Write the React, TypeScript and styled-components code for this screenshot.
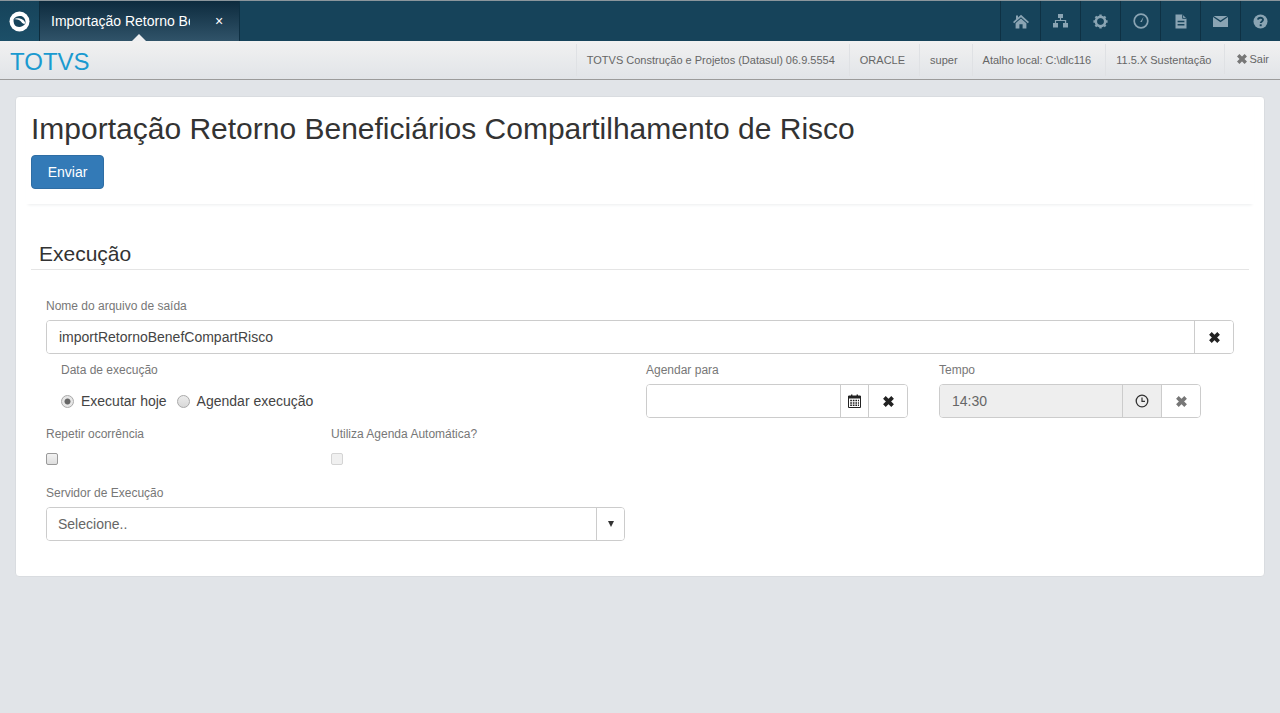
import React from "react";
import styled, { createGlobalStyle } from "styled-components";

const Global = createGlobalStyle`
  html, body { margin: 0; padding: 0; height: 100%; background: #e1e4e8; }
  body { font-family: "Liberation Sans", Arial, sans-serif; font-size: 14px; color: #333; }
  * { box-sizing: border-box; }
`;

const Page = styled.div`
  width: 1280px;
  height: 713px;
  overflow: hidden;
  background: #e1e4e8;
`;
const TopBar = styled.div`
  height: 41px;
  display: flex;
  background: #16435a;
  border-top: 1px solid #8b969c;
`;
const LogoBox = styled.div`
  width: 40px;
  display: flex;
  align-items: center;
  justify-content: center;
  background: linear-gradient(#16435a, #1c4f68);
  border-right: 1px solid #0d2c3d;
`;
const Tab = styled.div`
  position: relative;
  width: 200px;
  display: flex;
  align-items: center;
  padding-left: 11px;
  background: linear-gradient(#0d2b3e, #305369);
  border-right: 1px solid #0e2f42;
  color: #fff;
`;
const TabTitle = styled.span`
  width: 139px;
  overflow: hidden;
  white-space: nowrap;
  font-size: 14px;
`;
const TabClose = styled.span`
  margin-left: 25px;
  font-size: 14px;
  line-height: 1;
`;
const TabCaret = styled.span`
  position: absolute;
  left: 92px;
  bottom: 0;
  border-left: 7px solid transparent;
  border-right: 7px solid transparent;
  border-bottom: 7px solid #edeef0;
`;
const Spacer = styled.div`
  flex: 1;
`;
const IconButton = styled.div`
  width: 40px;
  display: flex;
  align-items: center;
  justify-content: center;
  color: #8aa4b3;
  border-left: 1px solid #0e3144;
`;
const SubBar = styled.div`
  height: 39px;
  display: flex;
  align-items: stretch;
  background: linear-gradient(#f1f1f1, #e1e4e8);
  border-bottom: 1px solid #9b9b9b;
`;
const Brand = styled.div`
  flex: 1;
  padding-left: 10px;
  font-size: 24px;
  line-height: 41px;
  color: #1a9ad0;
`;
const Info = styled.div`
  display: flex;
  align-items: center;
  margin: 3px 0;
  padding: 0 14px 0 10px;
  font-size: 11px;
  color: #666;
  border-left: 1px solid #dfe1e4;
`;
const VersionInfo = styled(Info)`
  padding: 0 13px 0 10px;
`;
const Exit = styled(Info)`
  margin-bottom: 5px;
  gap: 1px;
  padding: 0 11px;
`;
const Card = styled.main`
  margin: 16px 15px 0;
  height: 481px;
  background: #fff;
  border: 1px solid #d9dce0;
  border-radius: 4px;
`;
const PageHead = styled.header`
  height: 107px;
  margin: 0 10px;
  padding: 14px 5px 0;
  box-shadow: 0 3px 3px -2px #eceeef;
`;
const Title = styled.h1`
  margin: 0;
  font-size: 30px;
  line-height: 36px;
  font-weight: 400;
  color: #333;
`;
const PrimaryButton = styled.button`
  display: block;
  margin-top: 8px;
  width: 73px;
  height: 34px;
  padding: 0;
  background: #337ab7;
  border: 1px solid #2e6da4;
  border-radius: 4px;
  color: #fff;
  font: 14px "Liberation Sans", Arial, sans-serif;
`;
const Section = styled.section`
  margin: 0 15px;
  padding-top: 37px;
`;
const SectionTitle = styled.h2`
  margin: 0;
  padding-left: 8px;
  height: 29px;
  font-size: 21px;
  line-height: 26px;
  font-weight: 400;
  color: #333;
  border-bottom: 1px solid #e5e5e5;
`;
const Form = styled.div`
  padding: 29px 15px 0;
`;
const Label = styled.label`
  display: block;
  height: 15px;
  font-size: 12px;
  line-height: 15px;
  color: #777;
`;
const InputGroup = styled.div<{ $w?: number }>`
  display: flex;
  height: 34px;
  margin-top: 6px;
  width: ${(p) => (p.$w ? `${p.$w}px` : "100%")};
  border: 1px solid #ccc;
  border-radius: 4px;
  overflow: hidden;
  background: #fff;
`;
const InputText = styled.div<{ $off?: boolean; $hint?: boolean }>`
  flex: 1;
  display: flex;
  align-items: center;
  padding-left: ${(p) => (p.$hint ? 11 : 12)}px;
  font-size: 14px;
  color: ${(p) => (p.$off || p.$hint ? "#666" : "#444")};
  background: ${(p) => (p.$off ? "#eee" : "#fff")};
`;
const Addon = styled.div<{ $w?: number; $muted?: boolean; $off?: boolean }>`
  width: ${(p) => p.$w ?? 39}px;
  display: flex;
  align-items: center;
  justify-content: center;
  border-left: 1px solid #ccc;
  color: ${(p) => (p.$muted ? "#777" : "#222")};
  background: ${(p) => (p.$off ? "#eee" : "#fff")};
`;
const ExecRow = styled.div`
  display: flex;
  padding-top: 9px;
`;
const DateCol = styled.div`
  width: 600px;
  padding: 0 0 0 15px;
`;
const RadioRow = styled.div`
  display: flex;
  align-items: center;
  height: 20px;
  margin-top: 13px;
  font-size: 14px;
  color: #444;
`;
const Radio = styled.span<{ $on?: boolean }>`
  width: 13px;
  height: 13px;
  border-radius: 50%;
  border: 1px solid #a9a9a9;
  background: ${(p) => (p.$on ? "radial-gradient(circle, #666 0 2.6px, #e6e6e6 3.4px)" : "linear-gradient(#ececec, #d8d8d8)")};
  margin-left: ${(p) => (p.$on ? "0" : "10px")};
  margin-right: 7px;
`;
const FieldCol = styled.div<{ $w: number }>`
  width: ${(p) => p.$w}px;
`;
const CheckRow = styled.div`
  display: flex;
  padding-top: 9px;
`;
const CheckField = styled.div`
  width: 285px;
`;
const CheckCell = styled.div`
  height: 34px;
  padding-top: 11px;
`;
const Check = styled.span<{ $off?: boolean }>`
  display: block;
  width: 12px;
  height: 12px;
  border-radius: 2px;
  border: 1px solid ${(p) => (p.$off ? "#d4d4d4" : "#9a9a9a")};
  background: ${(p) => (p.$off ? "#f0f0f0" : "linear-gradient(#f2f2f2, #dedede)")};
`;
const ServerField = styled.div`
  padding-top: 10px;
`;
const Caret = styled.span`
  border-left: 3.5px solid transparent;
  border-right: 3.5px solid transparent;
  border-top: 6px solid #333;
`;

const Cross = ({ color = "currentColor", size = 13 }: { color?: string; size?: number }) => (
  <svg width={size} height={size} viewBox="0 0 13 13" aria-hidden>
    <path d="M2.4 2.4 10.6 10.6M10.6 2.4 2.4 10.6" fill="none" stroke={color} strokeWidth="3.7" />
  </svg>
);
const Logo = () => (
  <svg width="21" height="21" viewBox="0 0 21 21" aria-hidden>
    <circle cx="10.5" cy="10.5" r="10" fill="#fff" />
    <path d="M4.6 8.2C6.6 5.2 10.5 4.3 13.4 5.4 15.8 6.6 16.9 9.6 16.4 12.6 14.4 15.8 10.5 16.8 7.6 15.6 5.2 14.4 4.2 11.3 4.6 8.2Z" fill="#16435a" />
    <path d="M4.8 8.4C8 7.8 11 9 12.6 11.2 13.5 12.6 15 13 16.3 12.4 15.6 9 13 8 10.8 7.4 9 7 6.4 7.2 4.8 8.4Z" fill="#fff" />
  </svg>
);
const Home = () => (
  <svg width="16" height="15" viewBox="0 0 16 15" fill="currentColor" aria-hidden>
    <path d="M8 .8 16 8 14.8 9.2 8 3.2 1.2 9.2 0 8 3 5.3V1.6H5V3.5Z" />
    <path d="M8 4.4 13.4 9.2V14.6H9.6V10.2H6.4V14.6H2.6V9.2Z" />
  </svg>
);
const Sitemap = () => (
  <svg width="15" height="14" viewBox="0 0 15 14" fill="currentColor" aria-hidden>
    <path d="M5 0H10V4H8.1V5.9H13.2V9H15V13.5H10V9H11.9V7.1H3.1V9H5V13.5H0V9H1.9V5.9H6.9V4H5Z" />
  </svg>
);
const Gear = () => (
  <svg width="15" height="15" viewBox="0 0 15 15" aria-hidden>
    <circle cx="7.5" cy="7.5" r="4.6" fill="none" stroke="currentColor" strokeWidth="2.6" />
    <path d="M7.5 .4V14.6M.4 7.5H14.6M2.5 2.5 12.5 12.5M12.5 2.5 2.5 12.5" fill="none" stroke="currentColor" strokeWidth="2.4" strokeDasharray="2.4 9.3 2.4 0" opacity=".95" />
    <circle cx="7.5" cy="7.5" r="3" fill="#16435a" />
  </svg>
);
const GaugeClock = () => (
  <svg width="16" height="16" viewBox="0 0 16 16" aria-hidden>
    <circle cx="8" cy="8" r="6.8" fill="none" stroke="currentColor" strokeWidth="1.7" />
    <path d="M10.6 3.8 8.9 9H7.2Z" fill="currentColor" />
  </svg>
);
const Doc = () => (
  <svg width="12" height="15" viewBox="0 0 12 15" aria-hidden>
    <path d="M.5 .5H7.4L11.5 4.6V14.5H.5Z" fill="currentColor" />
    <path d="M7.6 .5V4.4H11.5" fill="none" stroke="#16435a" strokeWidth=".9" />
    <path d="M2.6 7.4H9.4M2.6 10.8H9.4" stroke="#16435a" strokeWidth="1.5" />
  </svg>
);
const Mail = () => (
  <svg width="15" height="11" viewBox="0 0 15 11" aria-hidden>
    <path d="M0 1 7.5 6.2 15 1V11H0Z" fill="currentColor" />
    <path d="M.6 0H14.4L7.5 4.6Z" fill="currentColor" />
  </svg>
);
const Help = () => (
  <svg width="15" height="15" viewBox="0 0 15 15" aria-hidden>
    <circle cx="7.5" cy="7.5" r="7" fill="currentColor" />
    <path d="M5 5.6C5.2 3.2 10 3 10 5.7 10 7.4 7.7 7.4 7.7 9" fill="none" stroke="#16435a" strokeWidth="1.9" />
    <path d="M6.7 10.3H8.7V12.2H6.7Z" fill="#16435a" />
  </svg>
);
const Calendar = () => (
  <svg width="13" height="14" viewBox="0 0 13 14" aria-hidden>
    <path d="M.5 2h12v11.5H.5Z" fill="none" stroke="#222" />
    <path d="M1 2h11v2.6H1Z" fill="#222" />
    <path d="M3 .6h1.4v2H3ZM8.6.6H10v2H8.6Z" fill="#222" />
    <path d="M2.2 5.8h1.7v1.5H2.2ZM4.8 5.8h1.7v1.5H4.8ZM7.4 5.8h1.7v1.5H7.4ZM10 5.8h1v1.5h-1ZM2.2 8.2h1.7v1.5H2.2ZM4.8 8.2h1.7v1.5H4.8ZM7.4 8.2h1.7v1.5H7.4ZM10 8.2h1v1.5h-1ZM2.2 10.6h1.7v1.5H2.2ZM4.8 10.6h1.7v1.5H4.8ZM7.4 10.6h1.7v1.5H7.4ZM10 10.6h1v1.5h-1Z" fill="#222" />
  </svg>
);
const Clock = () => (
  <svg width="14" height="14" viewBox="0 0 14 14" aria-hidden>
    <circle cx="7" cy="7" r="5.8" fill="none" stroke="#333" strokeWidth="1.3" />
    <path d="M7 3.4V7.3H10" fill="none" stroke="#333" strokeWidth="1.2" />
  </svg>
);

export default function App() {
  return (
    <Page>
      <Global />
      <TopBar>
        <LogoBox><Logo /></LogoBox>
        <Tab>
          <TabTitle>Importação Retorno Beneficiários</TabTitle>
          <TabClose>×</TabClose>
          <TabCaret />
        </Tab>
        <Spacer />
        <IconButton><Home /></IconButton>
        <IconButton><Sitemap /></IconButton>
        <IconButton><Gear /></IconButton>
        <IconButton><GaugeClock /></IconButton>
        <IconButton><Doc /></IconButton>
        <IconButton><Mail /></IconButton>
        <IconButton><Help /></IconButton>
      </TopBar>
      <SubBar>
        <Brand>TOTVS</Brand>
        <Info>TOTVS Construção e Projetos (Datasul) 06.9.5554</Info>
        <Info>ORACLE</Info>
        <Info>super</Info>
        <Info>Atalho local: C:\dlc116</Info>
        <VersionInfo>11.5.X Sustentação</VersionInfo>
        <Exit><Cross color="#777" size={12} />Sair</Exit>
      </SubBar>
      <Card>
        <PageHead>
          <Title>Importação Retorno Beneficiários Compartilhamento de Risco</Title>
          <PrimaryButton>Enviar</PrimaryButton>
        </PageHead>
        <Section>
          <SectionTitle>Execução</SectionTitle>
          <Form>
            <Label>Nome do arquivo de saída</Label>
            <InputGroup>
              <InputText>importRetornoBenefCompartRisco</InputText>
              <Addon><Cross /></Addon>
            </InputGroup>
            <ExecRow>
              <DateCol>
                <Label>Data de execução</Label>
                <RadioRow>
                  <Radio $on />Executar hoje<Radio />Agendar execução
                </RadioRow>
              </DateCol>
              <FieldCol $w={293}>
                <Label>Agendar para</Label>
                <InputGroup $w={262}>
                  <InputText />
                  <Addon $w={28}><Calendar /></Addon>
                  <Addon><Cross /></Addon>
                </InputGroup>
              </FieldCol>
              <FieldCol $w={262}>
                <Label>Tempo</Label>
                <InputGroup>
                  <InputText $off>14:30</InputText>
                  <Addon $off><Clock /></Addon>
                  <Addon $muted><Cross /></Addon>
                </InputGroup>
              </FieldCol>
            </ExecRow>
            <CheckRow>
              <CheckField>
                <Label>Repetir ocorrência</Label>
                <CheckCell><Check /></CheckCell>
              </CheckField>
              <CheckField>
                <Label>Utiliza Agenda Automática?</Label>
                <CheckCell><Check $off /></CheckCell>
              </CheckField>
            </CheckRow>
            <ServerField>
              <Label>Servidor de Execução</Label>
              <InputGroup $w={579}>
                <InputText $hint>Selecione..</InputText>
                <Addon $w={28}><Caret /></Addon>
              </InputGroup>
            </ServerField>
          </Form>
        </Section>
      </Card>
    </Page>
  );
}
